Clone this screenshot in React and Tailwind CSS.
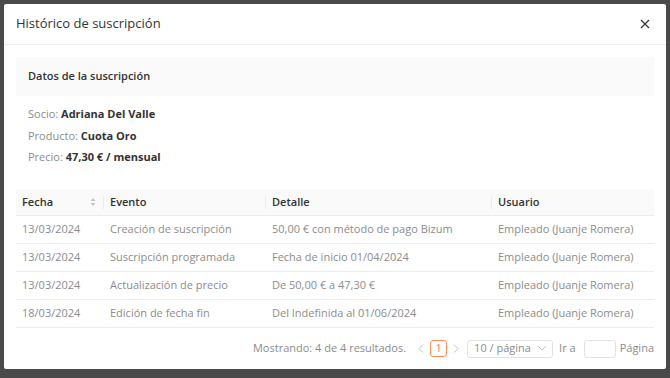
const rows = [
  ['13/03/2024', 'Creación de suscripción', '50,00 € con método de pago Bizum', 'Empleado (Juanje Romera)'],
  ['13/03/2024', 'Suscripción programada', 'Fecha de inicio 01/04/2024', 'Empleado (Juanje Romera)'],
  ['13/03/2024', 'Actualización de precio', 'De 50,00 € a 47,30 €', 'Empleado (Juanje Romera)'],
  ['18/03/2024', 'Edición de fecha fin', 'Del Indefinida al 01/06/2024', 'Empleado (Juanje Romera)'],
];

function SortIcon() {
  return (
    <svg width="6" height="10" viewBox="0 0 6 10" className="shrink-0 mr-[2px]">
      <path d="M3 1 L5.5 4 L0.5 4 Z" fill="#c4c4c4" />
      <path d="M3 9 L5.5 6 L0.5 6 Z" fill="#c4c4c4" />
    </svg>
  );
}

function Chevron({ dir }) {
  return (
    <svg width="6" height="9" viewBox="0 0 6 9" className="shrink-0">
      <path
        d={dir === 'left' ? 'M5 0.5 L1 4.5 L5 8.5' : 'M1 0.5 L5 4.5 L1 8.5'}
        stroke="#c4c4c4"
        strokeWidth="1"
        fill="none"
      />
    </svg>
  );
}

export default function App() {
  return (
    <div
      className="w-[670px] h-[378px] bg-[#4a4a4a] pt-[4px] pl-[4px] text-[#8c8c8c]"
      style={{ fontFamily: '"Open Sans", "Liberation Sans", sans-serif' }}
    >
      <div className="w-[662px] h-[365px] bg-white rounded-[2px] flex flex-col">
        <div className="h-[41px] shrink-0 border-b border-[#ececec] flex items-center justify-between pl-[12px] pr-[16px]">
          <span className="text-[13px] text-[#333]">Histórico de suscripción</span>
          <svg width="10" height="10" viewBox="0 0 10 10">
            <path d="M1 1 L9 9 M9 1 L1 9" stroke="#333" strokeWidth="1.3" />
          </svg>
        </div>

        <div className="px-[12px] pt-[12px] flex flex-col">
          <div className="h-[39px] bg-[#fafafa] flex items-center px-[12px] text-[11px] font-semibold text-[#333]">
            Datos de la suscripción
          </div>
          <div className="px-[12px] pt-[11px] flex flex-col gap-[7.5px] text-[11px] leading-[14px]">
            <div>
              Socio: <span className="font-bold text-[#333]">Adriana Del Valle</span>
            </div>
            <div>
              Producto: <span className="font-bold text-[#333]">Cuota Oro</span>
            </div>
            <div>
              Precio: <span className="font-bold text-[#333]">47,30 € / mensual</span>
            </div>
          </div>

          <div className="mt-[25px] text-[11px]">
            <div className="grid grid-cols-[88px_162px_226px_162px] h-[27px] bg-[#fafafa] border-b border-[#ececec] font-semibold text-[#333]">
              <div className="flex items-center justify-between px-[6px] relative">
                <span>Fecha</span>
                <SortIcon />
                <span className="absolute right-0 top-[7px] h-[13px] w-px bg-[#ececec]" />
              </div>
              <div className="flex items-center px-[6px] relative">
                Evento
                <span className="absolute right-0 top-[7px] h-[13px] w-px bg-[#ececec]" />
              </div>
              <div className="flex items-center px-[6px] relative">
                Detalle
                <span className="absolute right-0 top-[7px] h-[13px] w-px bg-[#ececec]" />
              </div>
              <div className="flex items-center px-[6px]">Usuario</div>
            </div>
            {rows.map((r, i) => (
              <div
                key={i}
                className="grid grid-cols-[88px_162px_226px_162px] h-[28px] border-b border-[#ececec] items-center"
              >
                {r.map((c, j) => (
                  <div key={j} className="px-[6px] whitespace-nowrap">
                    {c}
                  </div>
                ))}
              </div>
            ))}
          </div>

          <div className="h-[41px] flex items-center justify-end text-[11px]">
            <span className="mr-[12px]">Mostrando: 4 de 4 resultados.</span>
            <Chevron dir="left" />
            <span className="ml-[6px] mr-[6px] w-[17px] h-[17px] border border-[#ff8a5b] rounded-[3px] text-[#ff7a45] flex items-center justify-center">
              1
            </span>
            <Chevron dir="right" />
            <span className="ml-[8px] w-[86px] h-[18px] border border-[#e2e2e2] rounded-[3px] flex items-center justify-between px-[6px]">
              <span>10 / página</span>
              <svg width="8" height="5" viewBox="0 0 8 5">
                <path d="M0.5 0.5 L4 4 L7.5 0.5" stroke="#bfbfbf" fill="none" />
              </svg>
            </span>
            <span className="ml-[6px] mr-[8px]">Ir a</span>
            <span className="w-[32px] h-[18px] border border-[#e2e2e2] rounded-[3px]" />
            <span className="ml-[4px]">Página</span>
          </div>
        </div>
      </div>
    </div>
  );
}
